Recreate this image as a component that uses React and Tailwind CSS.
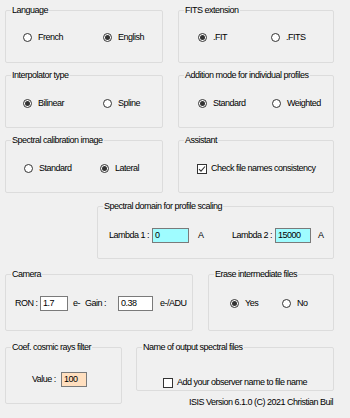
import clsx from "clsx";

function Group({ title, className, children }) {
  return (
    <fieldset className={clsx("rounded-[2px] border border-[#dcdcdc] px-0", className)}>
      <legend className="ml-[5px] whitespace-nowrap px-[1px] leading-[11px]">{title}</legend>
      {children}
    </fieldset>
  );
}

function Radio({ checked, label, className }) {
  return (
    <div className={clsx("flex items-center gap-[6px]", className)}>
      <span className="flex h-[9px] w-[9px] shrink-0 items-center justify-center rounded-full border border-[#333] bg-white">
        {checked && <span className="h-[5px] w-[5px] rounded-full bg-[#333]" />}
      </span>
      <span>{label}</span>
    </div>
  );
}

function Check({ checked, label }) {
  return (
    <div className="flex items-center gap-[4px]">
      <span className="flex h-[10px] w-[10px] shrink-0 items-center justify-center border border-[#333] bg-white">
        {checked && (
          <svg width="8" height="8" viewBox="0 0 8 8">
            <path d="M1 4.2 L3 6.2 L7 1.5" fill="none" stroke="#333" strokeWidth="1.1" />
          </svg>
        )}
      </span>
      <span>{label}</span>
    </div>
  );
}

function Field({ value, className }) {
  return (
    <span className={clsx("flex h-[15px] shrink-0 items-center border border-[#7a7a7a] pl-[2px]", className)}>
      {value}
    </span>
  );
}

export default function App() {
  return (
    <div className="h-[418px] w-[350px] overflow-hidden whitespace-nowrap bg-[#f0f0f0] pl-[5px] pt-[5px] font-['Liberation_Sans',Arial,sans-serif] text-[9px] leading-[11px] tracking-[-0.5px] text-black">
      <div className="grid grid-cols-[158px_156px] gap-x-[15px] gap-y-[7px]">
        <Group title="Language" className="h-[58px]">
          <div className="mt-[16px] flex pl-[17px]">
            <Radio label="French" className="w-[80px]" />
            <Radio label="English" checked />
          </div>
        </Group>
        <Group title="FITS extension" className="h-[58px]">
          <div className="mt-[16px] flex pl-[19px]">
            <Radio label=".FIT" checked className="w-[73px]" />
            <Radio label=".FITS" />
          </div>
        </Group>
        <Group title="Interpolator type" className="h-[58px]">
          <div className="mt-[17px] flex pl-[17px]">
            <Radio label="Bilinear" checked className="w-[80px]" />
            <Radio label="Spline" />
          </div>
        </Group>
        <Group title="Addition mode for individual profiles" className="h-[58px]">
          <div className="mt-[17px] flex pl-[19px]">
            <Radio label="Standard" checked className="w-[74px]" />
            <Radio label="Weighted" />
          </div>
        </Group>
        <Group title="Spectral calibration image" className="h-[58px]">
          <div className="mt-[17px] flex pl-[18px]">
            <Radio label="Standard" className="w-[76px]" />
            <Radio label="Lateral" checked />
          </div>
        </Group>
        <Group title="Assistant" className="h-[58px]">
          <div className="mt-[17px] flex pl-[18px]">
            <Check label="Check file names consistency" checked />
          </div>
        </Group>
      </div>

      <Group title="Spectral domain for profile scaling" className="ml-[92px] mt-[8px] h-[58px] w-[237px]">
        <div className="mt-[16px] flex items-center pl-[11px]">
          <span className="w-[43px]">Lambda 1 :</span>
          <Field value="0" className="w-[37px] bg-[#9ffcff]" />
          <span className="ml-[9px] w-[34px]">A</span>
          <span className="w-[43px]">Lambda 2 :</span>
          <Field value="15000" className="w-[36px] bg-[#9ffcff]" />
          <span className="ml-[7px]">A</span>
        </div>
      </Group>

      <div className="mt-[10px] flex gap-[15px]">
        <Group title="Camera" className="h-[62px] w-[188px]">
          <div className="mt-[16px] flex items-center pl-[9px]">
            <span className="w-[25px]">RON :</span>
            <Field value="1.7" className="w-[28px] bg-white" />
            <span className="ml-[5px] w-[12px]">e-</span>
            <span className="w-[33px]">Gain :</span>
            <Field value="0.38" className="w-[35px] bg-white" />
            <span className="ml-[7px]">e-/ADU</span>
          </div>
        </Group>
        <Group title="Erase intermediate files" className="h-[62px] w-[126px]">
          <div className="mt-[18px] flex pl-[21px]">
            <Radio label="Yes" checked className="w-[52px]" />
            <Radio label="No" />
          </div>
        </Group>
      </div>

      <div className="mt-[11px] flex gap-[14px]">
        <Group title="Coef. cosmic rays filter" className="h-[62px] w-[117px]">
          <div className="mt-[19px] flex items-center pl-[26px]">
            <span className="w-[29px]">Value :</span>
            <Field value="100" className="w-[26px] bg-[#ffdfbf]" />
          </div>
        </Group>
        <div className="flex w-[198px] flex-col">
          <Group title="Name of output spectral files" className="h-[49px]">
            <div className="mt-[24px] flex pl-[26px]">
              <Check label="Add your observer name to file name" />
            </div>
          </Group>
          <div className="mt-[6px] pr-[1px] text-right">ISIS Version 6.1.0 (C) 2021 Christian Buil</div>
        </div>
      </div>
    </div>
  );
}
